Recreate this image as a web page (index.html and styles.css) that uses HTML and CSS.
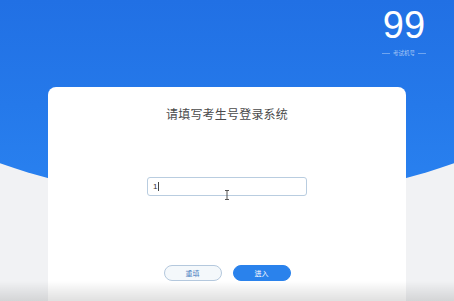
FILE: index.html
```html
<!DOCTYPE html>
<html>
  <head>
    <meta charset="utf-8">
    <title>考生登录</title>
    <link rel="stylesheet" href="styles.css">
  </head>
  <body>
    <div class="page">
      <div class="header">
        <div class="seat">
          <div class="seat-number">99</div>
          <div class="seat-label">考试机号</div>
        </div>
      </div>
      <div class="login-card">
        <h1 class="login-title">请填写考生号登录系统</h1>
        <div class="input-wrap">
          <input class="login-input" type="text" value="1">
          <span class="caret"></span>
          <svg class="ibeam" width="6" height="10" viewBox="0 0 6 10">
            <path d="M1 0.5h4M3 0.5v9M1 9.5h4" stroke="#555" stroke-width="1" fill="none"/>
          </svg>
        </div>
        <div class="actions">
          <button class="btn btn-reset">重填</button>
          <button class="btn btn-enter">进入</button>
        </div>
      </div>
      <div class="bottom-fade"></div>
    </div>
  </body>
</html>
```

FILE: styles.css
```css
html, body {
  margin: 0;
  padding: 0;
}

body {
  background: #f1f2f4;
  font-family: "Noto Sans CJK SC", "Noto Sans", sans-serif;
}

.page {
  background: #f1f2f4;
  display: flex;
  flex-direction: column;
  height: 301px;
  overflow: hidden;
  position: relative;
  width: 454px;
}

/* blue hero with the round bottom edge */
.page::before {
  background: linear-gradient(180deg, #2170e4 0%, #2579ea 50%, #2a83f1 100%);
  clip-path: circle(686px at 50% -484px);
  content: "";
  height: 210px;
  left: 0;
  position: absolute;
  top: 0;
  width: 100%;
}

.header {
  display: flex;
  height: 87px;
  justify-content: flex-end;
  padding-right: 28px;
  position: relative;
  box-sizing: border-box;
}

.seat {
  align-items: center;
  color: #fff;
  display: flex;
  flex-direction: column;
  padding-top: 3px;
  width: 44px;
}

.seat-number {
  font-family: "Liberation Sans", Roboto, sans-serif;
  font-size: 38px;
  font-weight: normal;
  line-height: 44px;
}

.seat-label {
  align-items: center;
  color: rgba(255, 255, 255, 0.6);
  display: flex;
  font-size: 5.5px;
  gap: 3px;
  line-height: 8px;
  margin-top: 2px;
  width: 100%;
}

.seat-label::before,
.seat-label::after {
  border-top: solid 1px rgba(255, 255, 255, 0.35);
  content: "";
  flex: 1;
}

.login-card {
  align-items: center;
  background: #fff;
  border-radius: 8px 8px 0 0;
  display: flex;
  flex: 1;
  flex-direction: column;
  margin: 0 48px;
  padding-top: 20px;
  position: relative;
}

.login-title {
  color: #4a4a4a;
  font-size: 12px;
  font-weight: normal;
  letter-spacing: 0.2px;
  line-height: 14px;
  margin: 0;
}

.input-wrap {
  margin-top: 56px;
  position: relative;
}

.login-input {
  border: solid 1px #b9cde0;
  border-radius: 3px;
  box-sizing: border-box;
  color: #333;
  display: block;
  font-family: "Liberation Sans", sans-serif;
  font-size: 8px;
  height: 19px;
  outline: none;
  padding: 0 5px;
  width: 160px;
}

.caret {
  background: #444;
  height: 9px;
  left: 11px;
  position: absolute;
  top: 5px;
  width: 1px;
}

.ibeam {
  left: 77px;
  position: absolute;
  top: 13px;
}

.actions {
  display: flex;
  gap: 11px;
  margin-top: 69px;
}

.btn {
  border-radius: 9px;
  box-sizing: border-box;
  font-family: "Noto Sans CJK SC", sans-serif;
  font-size: 7px;
  height: 16px;
  line-height: 14px;
  padding: 0;
  width: 58px;
}

.btn-reset {
  background: #f4f8fb;
  border: solid 1px #b4c8dd;
  color: #4b7fc1;
}

.btn-enter {
  background: #2a82ec;
  border: solid 1px #2a82ec;
  color: #fff;
}

.bottom-fade {
  background: linear-gradient(180deg, rgba(0, 0, 0, 0) 0%, rgba(0, 0, 0, 0.05) 40%, rgba(0, 0, 0, 0.12) 100%);
  bottom: 0;
  height: 20px;
  left: 0;
  position: absolute;
  width: 100%;
}
```
